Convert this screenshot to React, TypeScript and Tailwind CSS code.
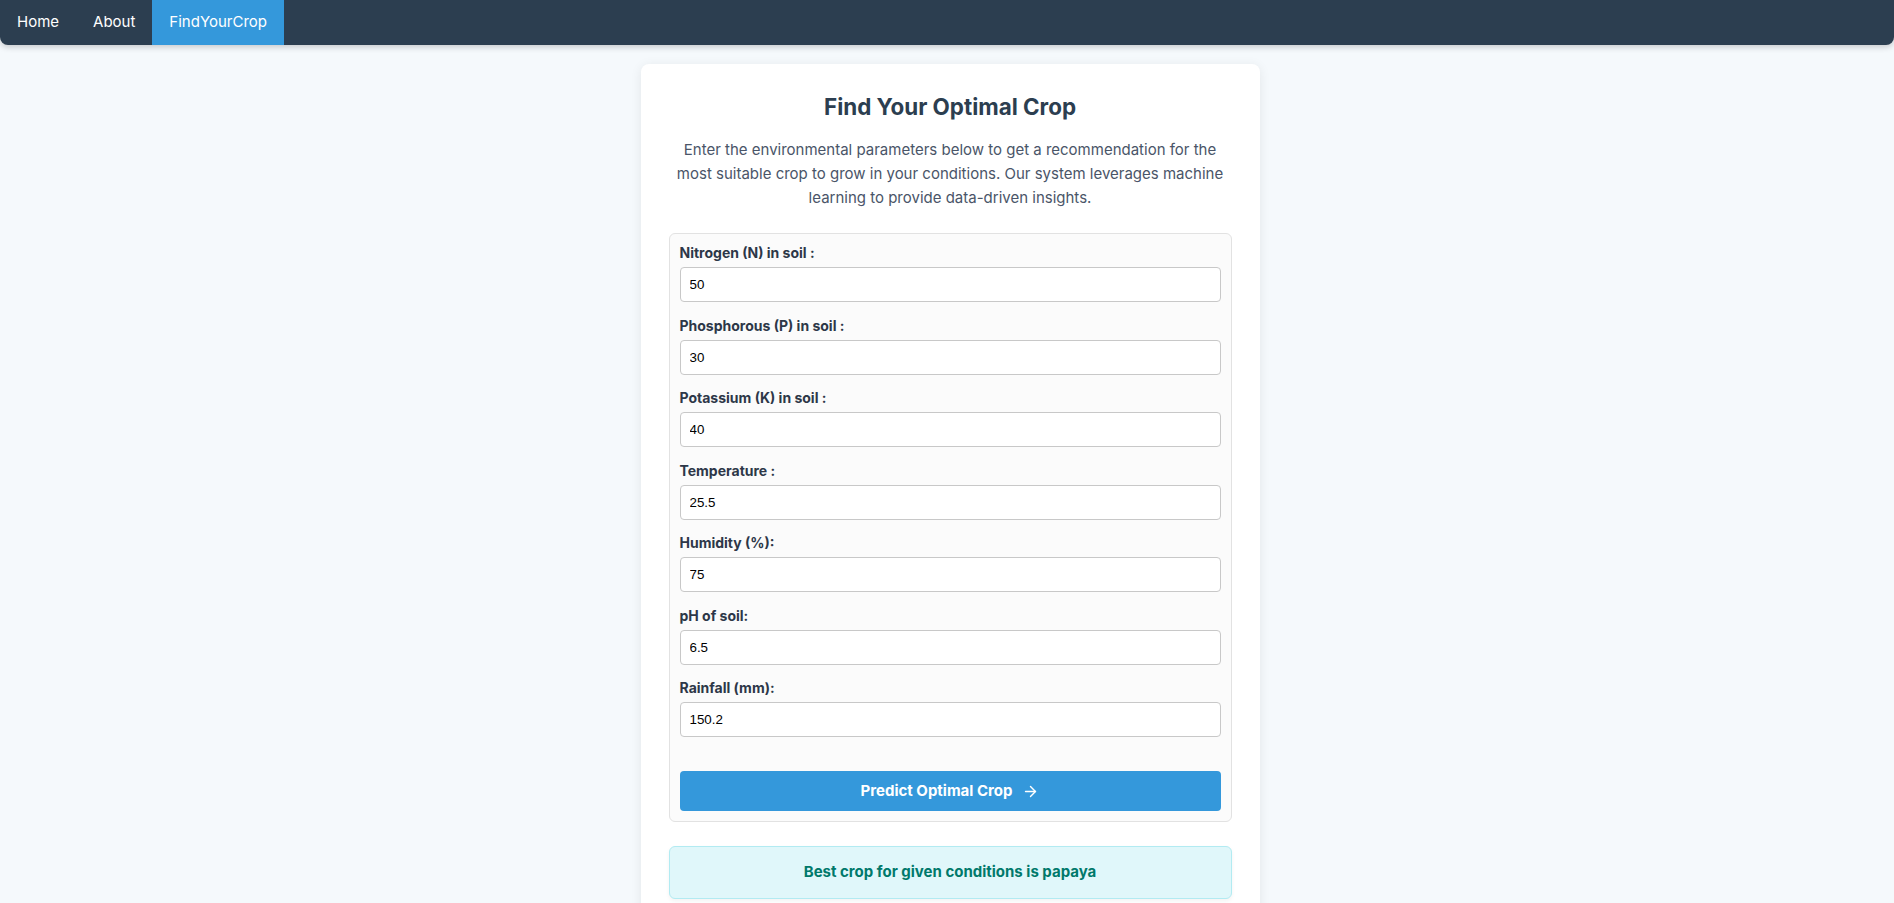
import React from 'react';
import { ArrowRight } from 'lucide-react';

const fields = [
    { label: 'Nitrogen (N) in soil :', value: '50' },
    { label: 'Phosphorous (P) in soil :', value: '30' },
    { label: 'Potassium (K) in soil :', value: '40' },
    { label: 'Temperature :', value: '25.5' },
    { label: 'Humidity (%):', value: '75' },
    { label: 'pH of soil:', value: '6.5' },
    { label: 'Rainfall (mm):', value: '150.2' },
];

const App: React.FC = () => {
    return (
        <div className="min-h-screen bg-[#f5f9fc] font-['Inter',sans-serif]">
            {/* Navbar */}
            <nav className="h-[45px] bg-[#2c3e50] rounded-b-lg shadow-[0_2px_6px_rgba(0,0,0,0.2)] flex items-stretch text-white text-[15px]">
                <a className="px-[17px] flex items-center">Home</a>
                <a className="px-[17px] flex items-center">About</a>
                <a className="px-[17px] flex items-center bg-[#3498db]">FindYourCrop</a>
            </nav>

            <div className="flex justify-center pl-[6px] pt-[19px]">
                <div className="w-[619px] bg-white rounded-lg shadow-[0_2px_12px_rgba(0,0,0,0.08)] px-7 pt-[27px] pb-8">
                    <h2 className="text-center text-[22.4px] leading-8 font-bold text-[#2c3e50]">Find Your Optimal Crop</h2>
                    <p className="mt-[15px] text-center text-[15px] leading-6 text-[#4a5568]">
                        Enter the environmental parameters below to get a recommendation for the most suitable crop to grow in your conditions. Our system leverages machine learning to provide data-driven insights.
                    </p>

                    <form className="mt-[23px] border border-[#e2e2e2] bg-[#fbfbfb] rounded-md px-[10px] pt-[9px] pb-[10px]">
                        {fields.map(f => (
                            <div key={f.label} className="mb-[13.5px]">
                                <label className="block text-[14px] leading-5 font-bold text-[#2d3748] mb-1">{f.label}</label>
                                <input
                                    type="text"
                                    defaultValue={f.value}
                                    className="block w-full h-[35px] border border-[#c8c8c8] rounded bg-white px-[9px] font-['Liberation_Sans',sans-serif] text-[13.33px] text-black outline-none"
                                />
                            </div>
                        ))}
                        <button
                            type="button"
                            className="mt-[34px] w-full h-10 rounded bg-[#3498db] text-white font-bold text-[15px] flex items-center justify-center gap-[10px]"
                        >
                            Predict Optimal Crop <ArrowRight size={17} strokeWidth={2} />
                        </button>
                    </form>

                    <div className="mt-6 h-[53px] rounded-md border border-[#b2ebf2] bg-[#e0f7fa] shadow-[0_2px_4px_rgba(0,0,0,0.05)] flex items-center justify-center text-[15px] font-bold text-[#00796b]">
                        Best crop for given conditions is papaya
                    </div>
                </div>
            </div>
        </div>
    );
};

export default App;
